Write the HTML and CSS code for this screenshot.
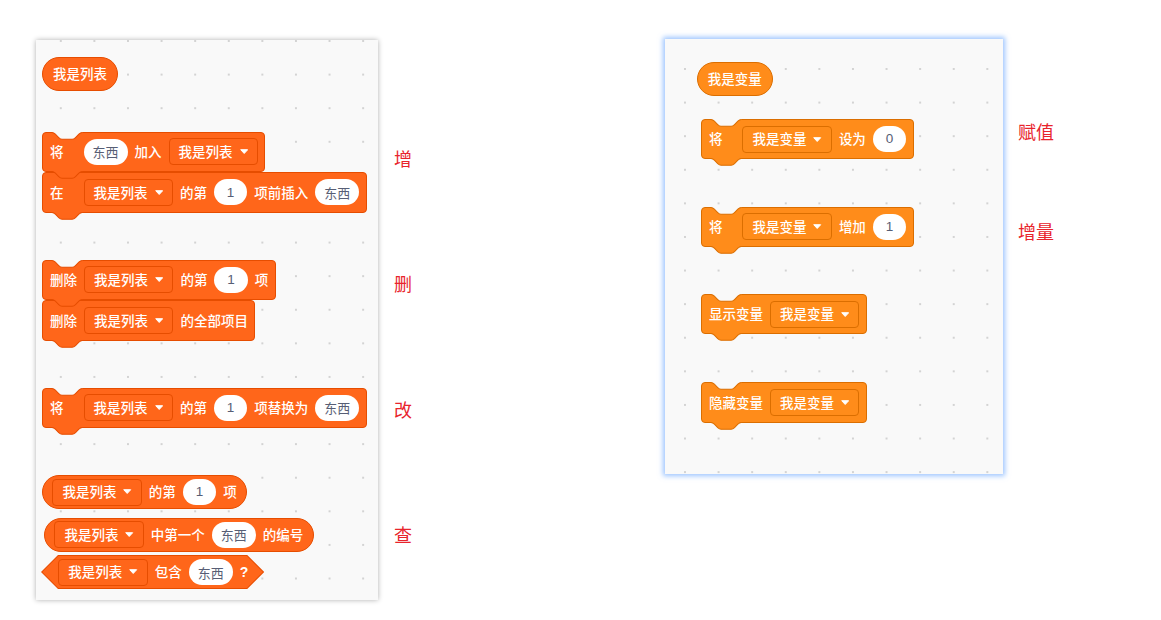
FILE: index.html
```html
<!DOCTYPE html>
<html lang="zh-CN">
<head>
<meta charset="utf-8">
<title>列表与变量</title>
<link rel="stylesheet" href="styles.css">
</head>
<body>
<div class="page">
  <div class="panel panel-list">
    <div class="rep list solo">我是列表</div>

    <div class="stack g-add">
      <div class="blk list">
        <svg class="notch" viewBox="0 0 36 9.6" preserveAspectRatio="none"><path class="f" d="M0,0H36V0.6c-2,0-3,1-4,2l-4,4c-1,1-2,2-4,2h-12c-2,0-3-1-4-2l-4-4c-1-1-2-2-4-2Z"/><path class="s" d="M0,0.6c2,0 3,1 4,2l4,4c1,1 2,2 4,2h12c2,0 3-1 4-2l4-4c1-1 2-2 4-2"/></svg>
        <span class="lead">将</span>
        <span class="oval">东西</span>
        <span>加入</span>
        <span class="dd">我是列表<svg class="arrow" viewBox="0 0 8.4 5.2"><path d="M0.7,0.7H7.7L4.2,4.5Z"/></svg></span>
        <svg class="tab" viewBox="0 0 36 9.6" preserveAspectRatio="none"><path class="f" d="M0,0H36V0.6c-2,0-3,1-4,2l-4,4c-1,1-2,2-4,2h-12c-2,0-3-1-4-2l-4-4c-1-1-2-2-4-2Z"/><path class="s" d="M0,0.6c2,0 3,1 4,2l4,4c1,1 2,2 4,2h12c2,0 3-1 4-2l4-4c1-1 2-2 4-2"/></svg>
      </div>
      <div class="blk list">
        <span class="lead">在</span>
        <span class="dd">我是列表<svg class="arrow" viewBox="0 0 8.4 5.2"><path d="M0.7,0.7H7.7L4.2,4.5Z"/></svg></span>
        <span>的第</span>
        <span class="oval num">1</span>
        <span>项前插入</span>
        <span class="oval">东西</span>
        <svg class="tab" viewBox="0 0 36 9.6" preserveAspectRatio="none"><path class="f" d="M0,0H36V0.6c-2,0-3,1-4,2l-4,4c-1,1-2,2-4,2h-12c-2,0-3-1-4-2l-4-4c-1-1-2-2-4-2Z"/><path class="s" d="M0,0.6c2,0 3,1 4,2l4,4c1,1 2,2 4,2h12c2,0 3-1 4-2l4-4c1-1 2-2 4-2"/></svg>
      </div>
    </div>

    <div class="stack g-del">
      <div class="blk list">
        <svg class="notch" viewBox="0 0 36 9.6" preserveAspectRatio="none"><path class="f" d="M0,0H36V0.6c-2,0-3,1-4,2l-4,4c-1,1-2,2-4,2h-12c-2,0-3-1-4-2l-4-4c-1-1-2-2-4-2Z"/><path class="s" d="M0,0.6c2,0 3,1 4,2l4,4c1,1 2,2 4,2h12c2,0 3-1 4-2l4-4c1-1 2-2 4-2"/></svg>
        <span class="lead">删除</span>
        <span class="dd">我是列表<svg class="arrow" viewBox="0 0 8.4 5.2"><path d="M0.7,0.7H7.7L4.2,4.5Z"/></svg></span>
        <span>的第</span>
        <span class="oval num">1</span>
        <span>项</span>
        <svg class="tab" viewBox="0 0 36 9.6" preserveAspectRatio="none"><path class="f" d="M0,0H36V0.6c-2,0-3,1-4,2l-4,4c-1,1-2,2-4,2h-12c-2,0-3-1-4-2l-4-4c-1-1-2-2-4-2Z"/><path class="s" d="M0,0.6c2,0 3,1 4,2l4,4c1,1 2,2 4,2h12c2,0 3-1 4-2l4-4c1-1 2-2 4-2"/></svg>
      </div>
      <div class="blk list">
        <span class="lead">删除</span>
        <span class="dd">我是列表<svg class="arrow" viewBox="0 0 8.4 5.2"><path d="M0.7,0.7H7.7L4.2,4.5Z"/></svg></span>
        <span>的全部项目</span>
        <svg class="tab" viewBox="0 0 36 9.6" preserveAspectRatio="none"><path class="f" d="M0,0H36V0.6c-2,0-3,1-4,2l-4,4c-1,1-2,2-4,2h-12c-2,0-3-1-4-2l-4-4c-1-1-2-2-4-2Z"/><path class="s" d="M0,0.6c2,0 3,1 4,2l4,4c1,1 2,2 4,2h12c2,0 3-1 4-2l4-4c1-1 2-2 4-2"/></svg>
      </div>
    </div>

    <div class="blk list g-mod">
      <svg class="notch" viewBox="0 0 36 9.6" preserveAspectRatio="none"><path class="f" d="M0,0H36V0.6c-2,0-3,1-4,2l-4,4c-1,1-2,2-4,2h-12c-2,0-3-1-4-2l-4-4c-1-1-2-2-4-2Z"/><path class="s" d="M0,0.6c2,0 3,1 4,2l4,4c1,1 2,2 4,2h12c2,0 3-1 4-2l4-4c1-1 2-2 4-2"/></svg>
      <span class="lead">将</span>
      <span class="dd">我是列表<svg class="arrow" viewBox="0 0 8.4 5.2"><path d="M0.7,0.7H7.7L4.2,4.5Z"/></svg></span>
      <span>的第</span>
      <span class="oval num">1</span>
      <span>项替换为</span>
      <span class="oval">东西</span>
      <svg class="tab" viewBox="0 0 36 9.6" preserveAspectRatio="none"><path class="f" d="M0,0H36V0.6c-2,0-3,1-4,2l-4,4c-1,1-2,2-4,2h-12c-2,0-3-1-4-2l-4-4c-1-1-2-2-4-2Z"/><path class="s" d="M0,0.6c2,0 3,1 4,2l4,4c1,1 2,2 4,2h12c2,0 3-1 4-2l4-4c1-1 2-2 4-2"/></svg>
    </div>

    <div class="rep list g-q1">
      <span class="dd">我是列表<svg class="arrow" viewBox="0 0 8.4 5.2"><path d="M0.7,0.7H7.7L4.2,4.5Z"/></svg></span>
      <span>的第</span>
      <span class="oval num">1</span>
      <span>项</span>
    </div>
    <div class="rep list g-q2">
      <span class="dd">我是列表<svg class="arrow" viewBox="0 0 8.4 5.2"><path d="M0.7,0.7H7.7L4.2,4.5Z"/></svg></span>
      <span>中第一个</span>
      <span class="oval">东西</span>
      <span>的编号</span>
    </div>
    <div class="bool list g-q3">
      <span class="dd">我是列表<svg class="arrow" viewBox="0 0 8.4 5.2"><path d="M0.7,0.7H7.7L4.2,4.5Z"/></svg></span>
      <span>包含</span>
      <span class="oval">东西</span>
      <span class="qm">?</span>
    </div>
  </div>

  <div class="tags tags-left">
    <span class="tag">增</span>
    <span class="tag">删</span>
    <span class="tag">改</span>
    <span class="tag">查</span>
  </div>

  <div class="panel panel-var">
    <div class="rep var solo">我是变量</div>

    <div class="blk var v-set">
      <svg class="notch" viewBox="0 0 36 9.6" preserveAspectRatio="none"><path class="f" d="M0,0H36V0.6c-2,0-3,1-4,2l-4,4c-1,1-2,2-4,2h-12c-2,0-3-1-4-2l-4-4c-1-1-2-2-4-2Z"/><path class="s" d="M0,0.6c2,0 3,1 4,2l4,4c1,1 2,2 4,2h12c2,0 3-1 4-2l4-4c1-1 2-2 4-2"/></svg>
      <span class="lead">将</span>
      <span class="dd">我是变量<svg class="arrow" viewBox="0 0 8.4 5.2"><path d="M0.7,0.7H7.7L4.2,4.5Z"/></svg></span>
      <span>设为</span>
      <span class="oval num">0</span>
      <svg class="tab" viewBox="0 0 36 9.6" preserveAspectRatio="none"><path class="f" d="M0,0H36V0.6c-2,0-3,1-4,2l-4,4c-1,1-2,2-4,2h-12c-2,0-3-1-4-2l-4-4c-1-1-2-2-4-2Z"/><path class="s" d="M0,0.6c2,0 3,1 4,2l4,4c1,1 2,2 4,2h12c2,0 3-1 4-2l4-4c1-1 2-2 4-2"/></svg>
    </div>

    <div class="blk var v-inc">
      <svg class="notch" viewBox="0 0 36 9.6" preserveAspectRatio="none"><path class="f" d="M0,0H36V0.6c-2,0-3,1-4,2l-4,4c-1,1-2,2-4,2h-12c-2,0-3-1-4-2l-4-4c-1-1-2-2-4-2Z"/><path class="s" d="M0,0.6c2,0 3,1 4,2l4,4c1,1 2,2 4,2h12c2,0 3-1 4-2l4-4c1-1 2-2 4-2"/></svg>
      <span class="lead">将</span>
      <span class="dd">我是变量<svg class="arrow" viewBox="0 0 8.4 5.2"><path d="M0.7,0.7H7.7L4.2,4.5Z"/></svg></span>
      <span>增加</span>
      <span class="oval num">1</span>
      <svg class="tab" viewBox="0 0 36 9.6" preserveAspectRatio="none"><path class="f" d="M0,0H36V0.6c-2,0-3,1-4,2l-4,4c-1,1-2,2-4,2h-12c-2,0-3-1-4-2l-4-4c-1-1-2-2-4-2Z"/><path class="s" d="M0,0.6c2,0 3,1 4,2l4,4c1,1 2,2 4,2h12c2,0 3-1 4-2l4-4c1-1 2-2 4-2"/></svg>
    </div>

    <div class="blk var v-show">
      <svg class="notch" viewBox="0 0 36 9.6" preserveAspectRatio="none"><path class="f" d="M0,0H36V0.6c-2,0-3,1-4,2l-4,4c-1,1-2,2-4,2h-12c-2,0-3-1-4-2l-4-4c-1-1-2-2-4-2Z"/><path class="s" d="M0,0.6c2,0 3,1 4,2l4,4c1,1 2,2 4,2h12c2,0 3-1 4-2l4-4c1-1 2-2 4-2"/></svg>
      <span>显示变量</span>
      <span class="dd">我是变量<svg class="arrow" viewBox="0 0 8.4 5.2"><path d="M0.7,0.7H7.7L4.2,4.5Z"/></svg></span>
      <svg class="tab" viewBox="0 0 36 9.6" preserveAspectRatio="none"><path class="f" d="M0,0H36V0.6c-2,0-3,1-4,2l-4,4c-1,1-2,2-4,2h-12c-2,0-3-1-4-2l-4-4c-1-1-2-2-4-2Z"/><path class="s" d="M0,0.6c2,0 3,1 4,2l4,4c1,1 2,2 4,2h12c2,0 3-1 4-2l4-4c1-1 2-2 4-2"/></svg>
    </div>

    <div class="blk var v-hide">
      <svg class="notch" viewBox="0 0 36 9.6" preserveAspectRatio="none"><path class="f" d="M0,0H36V0.6c-2,0-3,1-4,2l-4,4c-1,1-2,2-4,2h-12c-2,0-3-1-4-2l-4-4c-1-1-2-2-4-2Z"/><path class="s" d="M0,0.6c2,0 3,1 4,2l4,4c1,1 2,2 4,2h12c2,0 3-1 4-2l4-4c1-1 2-2 4-2"/></svg>
      <span>隐藏变量</span>
      <span class="dd">我是变量<svg class="arrow" viewBox="0 0 8.4 5.2"><path d="M0.7,0.7H7.7L4.2,4.5Z"/></svg></span>
      <svg class="tab" viewBox="0 0 36 9.6" preserveAspectRatio="none"><path class="f" d="M0,0H36V0.6c-2,0-3,1-4,2l-4,4c-1,1-2,2-4,2h-12c-2,0-3-1-4-2l-4-4c-1-1-2-2-4-2Z"/><path class="s" d="M0,0.6c2,0 3,1 4,2l4,4c1,1 2,2 4,2h12c2,0 3-1 4-2l4-4c1-1 2-2 4-2"/></svg>
    </div>
  </div>

  <div class="tags tags-right">
    <span class="tag">赋值</span>
    <span class="tag">增量</span>
  </div>
</div>
</body>
</html>
```

FILE: styles.css
```css
html, body {
  margin: 0;
  padding: 0;
  background: #ffffff;
}

body {
  font-family: "Noto Sans CJK SC", "Liberation Sans", sans-serif;
}

.page {
  display: flex;
  align-items: flex-start;
  height: 620px;
}

/* ---------- panels ---------- */
.panel {
  box-sizing: border-box;
  flex: none;
  display: flex;
  flex-direction: column;
  align-items: flex-start;
  background-color: #f9f9f9;
  background-image: radial-gradient(circle, #d3d3d3 0, #d3d3d3 0.7px, rgba(211, 211, 211, 0) 1.4px);
  background-size: 33.6px 33.6px;
}

.panel-list {
  margin: 40px 0 0 36px;
  width: 342px;
  height: 560px;
  padding: 17px 0 0 6px;
  background-position: 8px -15.8px;
  box-shadow: 0 0 5px rgba(0, 0, 0, 0.32);
}

.panel-var {
  margin: 39px 0 0 253px;
  width: 338px;
  height: 435px;
  padding: 22.7px 0 0 31.7px;
  background-position: 3.2px 13.2px;
  box-shadow: 0 0 5px 2px rgba(115, 172, 255, 0.7);
}

/* ---------- red tags ---------- */
.tags {
  flex: none;
  display: flex;
  flex-direction: column;
  align-items: flex-start;
  color: #e8242c;
  font-size: 18px;
  line-height: 18px;
}

.tags-left {
  margin-left: 16px;
  padding-top: 149px;
}

.tags-left .tag + .tag {
  margin-top: 107.3px;
}

.tags-right {
  margin-left: 15px;
  padding-top: 121.7px;
}

.tags-right .tag + .tag {
  margin-top: 82px;
}

/* ---------- blocks ---------- */
.blk,
.rep,
.bool {
  box-sizing: border-box;
  flex: none;
  display: flex;
  align-items: center;
  gap: 7px;
  color: #ffffff;
  font-size: 13.5px;
  font-weight: 500;
  line-height: 1;
  white-space: nowrap;
}

.list { background-color: #ff661a; border-color: #e64d00; }
.var  { background-color: #ff8c1a; border-color: #db6e00; }

.blk {
  position: relative;
  height: 40.5px;
  padding: 0 6.4px 0 7px;
  border-width: 1px;
  border-style: solid;
  border-radius: 4px;
}

.lead {
  min-width: 26.5px;
}

.notch,
.tab {
  position: absolute;
  left: 9px;
  width: 30.24px;
  height: 8.06px;
  overflow: visible;
}

.notch { top: -1px; }
.tab { bottom: -8.06px; z-index: 1; }

.notch .f { fill: #f9f9f9; }
.list .tab .f { fill: #ff661a; }
.var .tab .f { fill: #ff8c1a; }

.notch .s,
.tab .s {
  fill: none;
  stroke-width: 1.2;
}

.list .s { stroke: #e64d00; }
.var .s { stroke: #db6e00; }

.stack {
  display: flex;
  flex-direction: column;
  align-items: flex-start;
}

/* reporters */
.rep {
  height: 34px;
  border-width: 1px;
  border-style: solid;
  border-radius: 17px;
  padding: 0 9.4px;
}

.rep.solo {
  padding: 0 10px;
}

/* boolean */
.bool {
  position: relative;
  height: 34px;
  padding: 0 16px 0 17.3px;
  background-color: #e64d00;
  clip-path: polygon(17px 0, calc(100% - 17px) 0, 100% 50%, calc(100% - 17px) 100%, 17px 100%, 0 50%);
}

.bool::before {
  content: "";
  position: absolute;
  inset: 0;
  background-color: #ff661a;
  clip-path: polygon(17.4px 1px, calc(100% - 17.4px) 1px, calc(100% - 1.4px) 50%, calc(100% - 17.4px) calc(100% - 1px), 17.4px calc(100% - 1px), 1.4px 50%);
}

.bool > * {
  position: relative;
}

.qm {
  font-family: "Liberation Sans", sans-serif;
  font-size: 14px;
  font-weight: 700;
}

/* inputs */
.dd {
  box-sizing: border-box;
  height: 27px;
  display: flex;
  align-items: center;
  gap: 7px;
  padding: 0 9px 0 9px;
  border-width: 1px;
  border-style: solid;
  border-radius: 4px;
}

.list .dd { border-color: #e64d00; }
.var .dd { border-color: #db6e00; }

.arrow {
  width: 8.4px;
  height: 5.2px;
}

.arrow path {
  fill: #ffffff;
  stroke: #ffffff;
  stroke-width: 1;
  stroke-linejoin: round;
}

.oval {
  box-sizing: border-box;
  height: 26px;
  min-width: 33.4px;
  padding: 0 9px;
  border-radius: 13px;
  background: #ffffff;
  color: #575e75;
  display: flex;
  align-items: center;
  justify-content: center;
  font-size: 13px;
  font-weight: 400;
}

.oval.num {
  font-family: "Liberation Sans", sans-serif;
  font-size: 13.5px;
}

/* vertical rhythm, left panel */
.g-add { margin-top: 40.5px; }
.g-del { margin-top: 47px; }
.g-mod { margin-top: 47px; }
.g-q1 { margin-top: 47px; }
.g-q2 { margin-top: 8.5px; margin-left: 2px; }
.g-q3 { margin-top: 3.5px; margin-left: -1px; }

/* vertical rhythm, right panel */
.v-set { margin-top: 23.3px; margin-left: 4.3px; }
.v-inc { margin-top: 47.2px; margin-left: 4.3px; }
.v-show { margin-top: 46.8px; margin-left: 4.3px; }
.v-hide { margin-top: 48px; margin-left: 4.3px; }
```
